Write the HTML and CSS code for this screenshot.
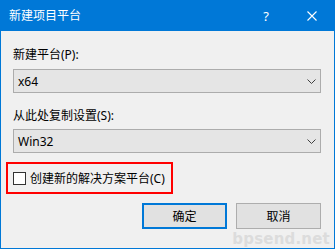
FILE: index.html
```html
<!DOCTYPE html>
<html lang="zh-CN">
<head>
    <meta charset="UTF-8">
    <title>新建项目平台</title>
    <link rel="stylesheet" href="styles.css">
</head>
<body>
    <div class="ventana">
        <div class="barra-titulo">
            <span class="titulo">新建项目平台</span>
            <span class="boton-ayuda">?</span>
            <span class="boton-cerrar">
                <svg width="10" height="10" viewBox="0 0 10 10">
                    <path d="M0.5 0.5 L9.5 9.5 M9.5 0.5 L0.5 9.5" stroke="#fff" stroke-width="1.1" fill="none"/>
                </svg>
            </span>
        </div>
        <div class="contenido">
            <div class="etiqueta etiqueta-primera">新建平台(P):</div>
            <div class="combo">
                <span>x64</span>
                <svg class="flecha" width="9" height="5" viewBox="0 0 9 5">
                    <path d="M0.5 0.5 L4.5 4.5 L8.5 0.5" stroke="#404040" stroke-width="1" fill="none"/>
                </svg>
            </div>
            <div class="etiqueta">从此处复制设置(S):</div>
            <div class="combo">
                <span>Win32</span>
                <svg class="flecha" width="9" height="5" viewBox="0 0 9 5">
                    <path d="M0.5 0.5 L4.5 4.5 L8.5 0.5" stroke="#404040" stroke-width="1" fill="none"/>
                </svg>
            </div>
            <div class="marco-rojo">
                <span class="casilla"></span>
                <span>创建新的解决方案平台(C)</span>
            </div>
            <div class="botones">
                <button class="boton boton-defecto">确定</button>
                <button class="boton">取消</button>
            </div>
        </div>
        <div class="marca-agua">bpsend.net</div>
    </div>
</body>
</html>
```

FILE: styles.css
```css
* {
    box-sizing: border-box;
}

body {
    margin: 0;
    font-family: "Noto Sans", "Noto Sans CJK SC", sans-serif;
    font-size: 12px;
    color: #000;
}

.ventana {
    position: relative;
    width: 335px;
    height: 249px;
    background-color: #f0f0f0;
    border: 1px solid #0078d7;
    border-top: none;
}

.barra-titulo {
    display: flex;
    align-items: center;
    height: 31px;
    background-color: #0078d7;
    color: #fff;
    padding-left: 8px;
}

.titulo {
    flex: 1;
    font-size: 12px;
    line-height: 16px;
}

.boton-ayuda {
    width: 10px;
    font-size: 13px;
    text-align: center;
    margin-right: 36px;
}

.boton-cerrar {
    display: flex;
    width: 10px;
    margin-right: 17px;
}

.contenido {
    padding: 16px 13px 0 12px;
}

.etiqueta {
    line-height: 16px;
    margin-top: 15px;
    margin-bottom: 5px;
}

.etiqueta-primera {
    margin-top: 0;
    margin-bottom: 6px;
}

.combo {
    display: flex;
    align-items: center;
    justify-content: space-between;
    height: 24px;
    padding: 0 4px 0 4px;
    background-color: #e5e5e5;
    border: 1px solid #acacac;
}

.marco-rojo {
    display: flex;
    align-items: center;
    width: 167px;
    height: 32px;
    margin: 9px 0 0 -7px;
    padding-left: 5px;
    border: 2px solid #f00;
}

.casilla {
    width: 13px;
    height: 13px;
    margin-right: 4px;
    background-color: #fff;
    border: 1px solid #333;
}

.botones {
    display: flex;
    justify-content: flex-end;
    gap: 9px;
    margin-top: 9px;
}

.boton {
    width: 85px;
    height: 26px;
    font-family: inherit;
    font-size: 12px;
    background-color: #e1e1e1;
    border: 1px solid #adadad;
    padding: 0;
}

.boton-defecto {
    border: 2px solid #0078d7;
}

.marca-agua {
    position: absolute;
    right: 4px;
    bottom: 0;
    font-family: "DejaVu Sans", sans-serif;
    font-weight: bold;
    font-size: 15px;
    color: #dcdcdc;
    letter-spacing: 0.2px;
}
```
